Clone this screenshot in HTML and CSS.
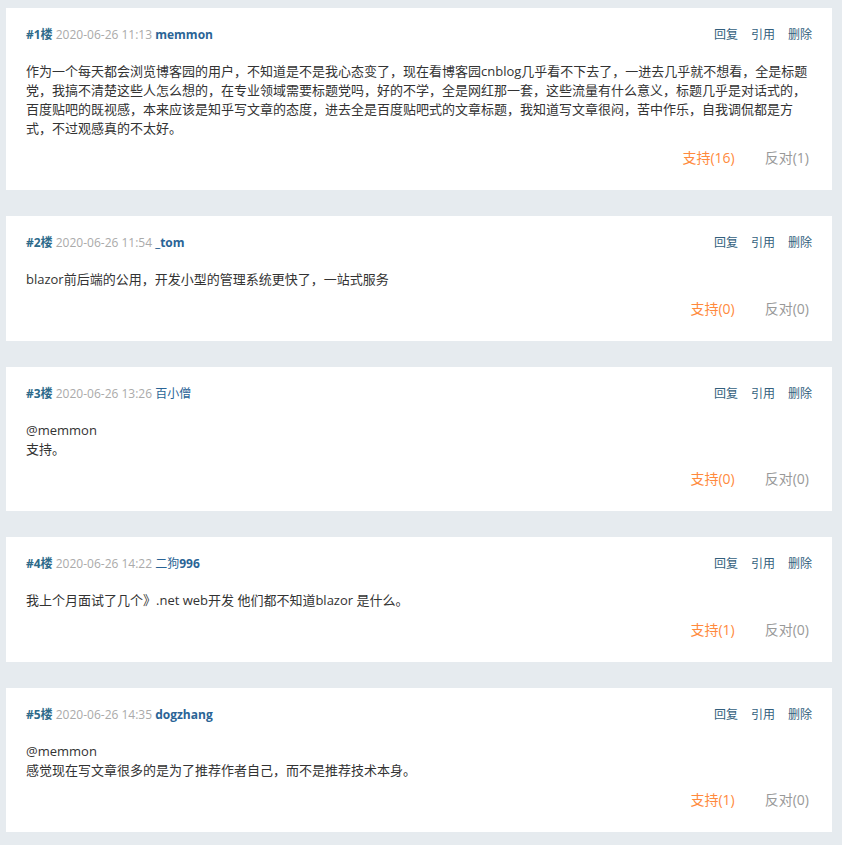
FILE: index.html
```html
<!DOCTYPE html>
<html lang="zh-CN">
<head>
    <meta charset="UTF-8">
    <meta name="viewport" content="width=device-width, initial-scale=1.0">
    <title>评论列表</title>
    <link rel="stylesheet" href="styles.css">
</head>
<body>
    <div class="comment-list">
        <div class="comment">
            <div class="comment-head">
                <div class="meta">
                    <a class="floor" href="#">#1楼</a>
                    <span class="date">2020-06-26 11:13</span>
                    <a class="author" href="#">memmon</a>
                </div>
                <div class="actions">
                    <a href="#">回复</a>
                    <a href="#">引用</a>
                    <a href="#">删除</a>
                </div>
            </div>
            <div class="comment-body">作为一个每天都会浏览博客园的用户，不知道是不是我心态变了，现在看博客园cnblog几乎看不下去了，一进去几乎就不想看，全是标题党，我搞不清楚这些人怎么想的，在专业领域需要标题党吗，好的不学，全是网红那一套，这些流量有什么意义，标题几乎是对话式的，百度贴吧的既视感，本来应该是知乎写文章的态度，进去全是百度贴吧式的文章标题，我知道写文章很闷，苦中作乐，自我调侃都是方式，不过观感真的不太好。</div>
            <div class="votes">
                <a class="digg" href="#">支持(16)</a>
                <a class="bury" href="#">反对(1)</a>
            </div>
        </div>

        <div class="comment">
            <div class="comment-head">
                <div class="meta">
                    <a class="floor" href="#">#2楼</a>
                    <span class="date">2020-06-26 11:54</span>
                    <a class="author" href="#">_tom</a>
                </div>
                <div class="actions">
                    <a href="#">回复</a>
                    <a href="#">引用</a>
                    <a href="#">删除</a>
                </div>
            </div>
            <div class="comment-body">blazor前后端的公用，开发小型的管理系统更快了，一站式服务</div>
            <div class="votes">
                <a class="digg" href="#">支持(0)</a>
                <a class="bury" href="#">反对(0)</a>
            </div>
        </div>

        <div class="comment">
            <div class="comment-head">
                <div class="meta">
                    <a class="floor" href="#">#3楼</a>
                    <span class="date">2020-06-26 13:26</span>
                    <a class="author plain" href="#">百小僧</a>
                </div>
                <div class="actions">
                    <a href="#">回复</a>
                    <a href="#">引用</a>
                    <a href="#">删除</a>
                </div>
            </div>
            <div class="comment-body">@memmon<br>支持。</div>
            <div class="votes">
                <a class="digg" href="#">支持(0)</a>
                <a class="bury" href="#">反对(0)</a>
            </div>
        </div>

        <div class="comment">
            <div class="comment-head">
                <div class="meta">
                    <a class="floor" href="#">#4楼</a>
                    <span class="date">2020-06-26 14:22</span>
                    <a class="author" href="#"><span class="plain">二狗</span>996</a>
                </div>
                <div class="actions">
                    <a href="#">回复</a>
                    <a href="#">引用</a>
                    <a href="#">删除</a>
                </div>
            </div>
            <div class="comment-body">我上个月面试了几个》.net web开发 他们都不知道blazor 是什么。</div>
            <div class="votes">
                <a class="digg" href="#">支持(1)</a>
                <a class="bury" href="#">反对(0)</a>
            </div>
        </div>

        <div class="comment">
            <div class="comment-head">
                <div class="meta">
                    <a class="floor" href="#">#5楼</a>
                    <span class="date">2020-06-26 14:35</span>
                    <a class="author" href="#">dogzhang</a>
                </div>
                <div class="actions">
                    <a href="#">回复</a>
                    <a href="#">引用</a>
                    <a href="#">删除</a>
                </div>
            </div>
            <div class="comment-body">@memmon<br>感觉现在写文章很多的是为了推荐作者自己，而不是推荐技术本身。</div>
            <div class="votes">
                <a class="digg" href="#">支持(1)</a>
                <a class="bury" href="#">反对(0)</a>
            </div>
        </div>
    </div>
</body>
</html>
```

FILE: styles.css
```css
body {
    font-family: "Segoe UI", "Open Sans", "Noto Sans CJK SC", sans-serif;
    margin: 0;
    padding: 0;
    background-color: #e6ebef;
    color: #333;
}
a {
    text-decoration: none;
}
.comment-list {
    padding: 8px 10px 0 6px;
}
.comment {
    background: #fff;
    padding: 19px 20px 22px;
    margin-bottom: 26px;
}
.comment-head {
    display: flex;
    justify-content: space-between;
    align-items: center;
    font-size: 12px;
    line-height: 16px;
}
.meta .floor {
    color: #2d6a8a;
    font-weight: bold;
}
.meta .date {
    color: #aaa;
}
.meta .author {
    color: #2a6496;
    font-weight: bold;
}
.meta .plain {
    font-weight: normal;
}
.actions {
    display: flex;
    gap: 13px;
}
.actions a {
    color: #335f7d;
}
.comment-body {
    margin-top: 19px;
    font-size: 13px;
    line-height: 19px;
    color: #333;
}
.votes {
    display: flex;
    justify-content: flex-end;
    gap: 30px;
    margin-top: 10px;
    padding-right: 3px;
    font-size: 14px;
    line-height: 20px;
}
.votes .digg {
    color: #ff8a3d;
}
.votes .bury {
    color: #999;
}
```
